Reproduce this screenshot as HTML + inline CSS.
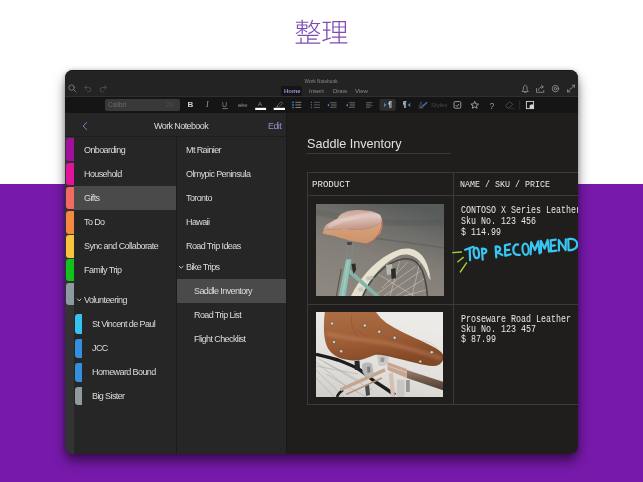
<!DOCTYPE html>
<html><head><meta charset="utf-8">
<style>
*{margin:0;padding:0;box-sizing:border-box}
html,body{width:643px;height:482px;overflow:hidden;background:#fff;font-family:"Liberation Sans",sans-serif}
.a{position:absolute}
#bg{left:0;top:184px;width:643px;height:298px;background:#7719aa}
#sh{left:65px;top:70px;width:513px;height:384px;border-radius:8px;box-shadow:0 7px 12px rgba(0,0,0,0.5),0 0 4px rgba(0,0,0,0.2)}
#frame{left:65px;top:70px;width:513px;height:384px;border-radius:8px;overflow:hidden;background:#262626}
#in{left:-65px;top:-70px;width:643px;height:482px;will-change:transform}
.t{position:absolute;white-space:pre;color:#dcdcdc;font-size:9px;letter-spacing:-0.6px;line-height:10px}
.tab{position:absolute;width:8px;border-radius:3px 0 0 3px}
.stab{position:absolute;width:7px;border-radius:3px 0 0 3px}
.mono{position:absolute;white-space:pre;font-family:"Liberation Mono",monospace;color:#e8e8e8;font-size:10px;line-height:10.7px;transform-origin:0 0}

</style></head><body>
<div id="bg" class="a"></div>
<svg class="a" style="left:0;top:0" width="643" height="60">
<g fill="#7e4db3">
<path transform="translate(294.3 42.4) scale(0.0272 -0.0272)" d="M224 174V-3H49V-46H953V-3H523V99H829V140H523V235H886V279H121V235H475V-3H271V174ZM93 660V496H255C207 434 119 371 44 342C54 335 67 319 74 309C141 339 217 396 268 455V310H313V496H481V660H313V721H513V762H313V835H268V762H60V721H268V660ZM136 622H268V534H136ZM313 622H437V534H313ZM313 455C365 429 427 390 460 361L483 393C451 422 388 459 336 482ZM633 673H839C817 600 783 539 737 488C688 545 653 609 631 669ZM648 835C619 729 569 633 502 570C513 562 530 546 538 538C562 563 585 592 606 625C629 570 662 512 708 459C652 407 582 369 500 341C509 333 524 313 530 304C610 335 680 375 737 427C787 376 850 332 926 301C931 312 945 331 955 340C879 367 817 408 768 457C821 514 861 585 887 673H950V717H654C670 751 683 788 693 825Z"/>
<path transform="translate(321.2 42.4) scale(0.0272 -0.0272)" d="M454 547H636V393H454ZM681 547H865V393H681ZM454 742H636V589H454ZM681 742H865V589H681ZM311 5V-40H962V5H683V168H928V213H683V349H913V786H408V349H634V213H393V168H634V5ZM42 86 55 36C139 65 250 103 357 139L349 186L232 146V424H339V471H232V714H352V761H52V714H184V471H63V424H184V131Z"/>
</g></svg>
<div id="sh" class="a"></div>
<div id="frame" class="a"><div id="in" class="a">
<!-- title bar -->
<div class="a" style="left:65px;top:69px;width:513px;height:27px;background:#232323"></div>
<div class="a" style="left:65px;top:70px;width:513px;height:1px;background:#1a1a1a"></div>
<div class="a" style="left:65px;top:96px;width:513px;height:1px;background:#2e2e2e"></div>
<div class="a" style="left:65px;top:97px;width:513px;height:16px;background:#151515"></div>
<div class="a" style="left:281px;top:86px;width:21px;height:10px;background:#151515"></div>
<div class="t" style="left:304.5px;top:77.3px;font-size:4.8px;letter-spacing:0;color:#8a8a8a">Work Notebook</div>
<div class="t" style="left:284px;top:86px;font-size:6px;letter-spacing:0;color:#a58bd6;font-weight:bold">Home</div>
<div class="t" style="left:309px;top:86px;font-size:6px;letter-spacing:0;color:#8a8a8a">Insert</div>
<div class="t" style="left:333px;top:86px;font-size:6px;letter-spacing:0;color:#8a8a8a">Draw</div>
<div class="t" style="left:355px;top:86px;font-size:6px;letter-spacing:0;color:#8a8a8a">View</div>
<!-- font box -->
<div class="a" style="left:105px;top:99px;width:75px;height:12px;background:#393939;border-radius:2px"></div>
<div class="t" style="left:108px;top:99.8px;font-size:6.4px;letter-spacing:0;color:#6a6a6a">Calibri</div>
<div class="t" style="left:166px;top:99.8px;font-size:6.4px;letter-spacing:0;color:#505050">20</div>
<!-- content bg -->
<div class="a" style="left:287px;top:113px;width:291px;height:341px;background:#1f1e1d"></div>
<div class="a" style="left:286px;top:113px;width:1px;height:341px;background:#181818"></div>
<!-- nav header -->
<div class="a" style="left:65px;top:136px;width:221px;height:1px;background:#1d1d1d"></div>
<div class="t" style="left:154px;top:121px;">Work Notebook</div>
<div class="t" style="left:268px;top:121px;color:#9c88cc">Edit</div>
<!-- tab strip -->
<div class="a" style="left:65px;top:137px;width:9px;height:317px;background:#333"></div>
<div class="a" style="left:176px;top:137px;width:1px;height:317px;background:#1c1c1c"></div>
<div class="a" style="left:74px;top:186px;width:102px;height:24px;background:#4a4a4a"></div>
<div class="a" style="left:177px;top:279px;width:109px;height:24px;background:#4a4a4a"></div>
<div class="tab" style="left:66px;top:138px;height:23px;background:#a0109a"></div>
<div class="tab" style="left:66px;top:163px;height:22px;background:#e2139a"></div>
<div class="tab" style="left:66px;top:187px;height:22px;background:#f26b62"></div>
<div class="tab" style="left:66px;top:211px;height:23px;background:#f48a42"></div>
<div class="tab" style="left:66px;top:235px;height:23px;background:#f8c43e"></div>
<div class="tab" style="left:66px;top:259px;height:22px;background:#13c11e"></div>
<div class="tab" style="left:66px;top:283px;height:22px;background:#8d9aa1"></div>
<div class="stab" style="left:75px;top:314px;height:20px;background:#35c4f2"></div>
<div class="stab" style="left:75px;top:339px;height:19px;background:#3390e0"></div>
<div class="stab" style="left:75px;top:363px;height:19px;background:#3390e0"></div>
<div class="stab" style="left:75px;top:387px;height:18px;background:#909aa1"></div>
<!-- sections text -->
<div class="t" style="left:84px;top:145px">Onboarding</div>
<div class="t" style="left:84px;top:169px">Household</div>
<div class="t" style="left:84px;top:193px">Gifts</div>
<div class="t" style="left:84px;top:217px">To Do</div>
<div class="t" style="left:84px;top:241px">Sync and Collaborate</div>
<div class="t" style="left:84px;top:265px">Family Trip</div>
<div class="t" style="left:84px;top:295px">Volunteering</div>
<div class="t" style="left:92px;top:319px">St Vincent de Paul</div>
<div class="t" style="left:92px;top:343px">JCC</div>
<div class="t" style="left:92px;top:367px">Homeward Bound</div>
<div class="t" style="left:92px;top:391px">Big Sister</div>
<!-- pages text -->
<div class="t" style="left:186px;top:145px">Mt Rainier</div>
<div class="t" style="left:186px;top:169px">Olmypic Peninsula</div>
<div class="t" style="left:186px;top:193px">Toronto</div>
<div class="t" style="left:186px;top:217px">Hawaii</div>
<div class="t" style="left:186px;top:241px">Road Trip Ideas</div>
<div class="t" style="left:186px;top:262px">Bike Trips</div>
<div class="t" style="left:194px;top:286px">Saddle Inventory</div>
<div class="t" style="left:194px;top:310px">Road Trip List</div>
<div class="t" style="left:194px;top:334px">Flight Checklist</div>
<!-- content -->
<div class="t" style="left:307px;top:137px;font-size:12.6px;letter-spacing:0;color:#e0e0e0;line-height:14px">Saddle Inventory</div>
<div class="a" style="left:306px;top:153px;width:145px;height:1px;background:#383838"></div>
<!-- table -->
<div class="a" style="left:307px;top:172px;width:280px;height:233px;border:1px solid #3a3a3a"></div>
<div class="a" style="left:307px;top:195px;width:280px;height:1px;background:#3a3a3a"></div>
<div class="a" style="left:307px;top:304px;width:280px;height:1px;background:#3a3a3a"></div>
<div class="a" style="left:453px;top:172px;width:1px;height:233px;background:#3a3a3a"></div>
<div class="mono" style="left:312px;top:179.6px;font-size:9.5px;transform:scaleX(0.956)">PRODUCT</div>
<div class="mono" style="left:460px;top:179.6px;font-size:9.5px;transform:scaleX(0.877)">NAME / SKU / PRICE</div>
<div class="mono" style="left:461px;top:206.3px;transform:scaleX(0.833)">CONTOSO X Series Leather
Sku No. 123 456
$ 114.99</div>
<div class="mono" style="left:461px;top:314.6px;line-height:10.2px;transform:scaleX(0.833)">Proseware Road Leather
Sku No. 123 457
$ 87.99</div>

<svg class="a" style="left:0;top:0" width="643" height="482" fill="none">
<!-- title bar icons -->
<g stroke="#7c7c7c" stroke-width="0.9" stroke-linecap="round">
<circle cx="71.6" cy="87.6" r="2.7"/>
<path d="M73.6 89.6 L76 92"/>
</g>
<g stroke="#4e4e4e" stroke-width="0.9" stroke-linecap="round" stroke-linejoin="round">
<path d="M86.6 85.5 L84.6 87.5 L86.6 89.5 M84.8 87.5 H88.6 A2.2 2.2 0 0 1 88.6 91.9 H87.6"/>
<path d="M104.4 85.5 L106.4 87.5 L104.4 89.5 M106.2 87.5 H102.4 A2.2 2.2 0 0 0 102.4 91.9 H103.4"/>
</g>
<g stroke="#8a8a8a" stroke-width="0.9" stroke-linecap="round" stroke-linejoin="round">
<path d="M522.3 91.2 C523.2 90.4 523.4 89.6 523.4 88 C523.4 86.2 524.1 85.2 525.2 85.2 C526.3 85.2 527 86.2 527 88 C527 89.6 527.2 90.4 528.1 91.2 Z M524.3 92.3 H526.1"/>
<path d="M536.5 88.5 V92.3 H543.8 V90.5 M538.5 90.2 C539 87.5 540.5 86.8 543 86.8 M541.5 85.3 L543.3 86.8 L541.5 88.3"/>
<circle cx="555.5" cy="88.6" r="3.2"/>
<circle cx="555.5" cy="88.6" r="1.3"/>
<path d="M567.6 91.8 L571 88.4 M567.6 91.8 H569.8 M567.6 91.8 V89.6 M574.4 85.2 L571 88.6 M574.4 85.2 H572.2 M574.4 85.2 V87.4"/>
</g>
<!-- ribbon -->
<g font-family="Liberation Sans" >
<text x="187.6" y="107.2" font-size="8" font-weight="bold" fill="#cfcfcf">B</text>
<text x="206" y="107.4" font-size="8" font-style="italic" font-family="Liberation Serif" fill="#9a9a9a">I</text>
<text x="222" y="107" font-size="7" fill="#8a8a8a">U</text>
<text x="237.8" y="107.3" font-size="6" fill="#777">abc</text>
<text x="258" y="105.8" font-size="6.2" fill="#8a8a8a">A</text>
</g>
<path d="M222.3 108.6 H227.8" stroke="#8a8a8a" stroke-width="0.8"/>
<path d="M237.8 105.4 H246.8" stroke="#777" stroke-width="0.6"/>
<rect x="255.2" y="107.8" width="10.9" height="2.2" fill="#fff"/>
<rect x="273.7" y="107.8" width="11.3" height="2.2" fill="#fff"/>
<path d="M277 106 L281 101.8 L282.6 103.3 L278.6 107.2 Z" stroke="#777" stroke-width="0.7"/>
<path d="M276.2 107.4 L277 106 L278.4 107.2 Z" fill="#c07030"/>
<rect x="379.4" y="99" width="16.4" height="11.7" rx="2" fill="#2e2e2e"/>
<g fill="#3d8ad6">
<circle cx="293" cy="102.3" r="0.85"/><circle cx="293" cy="104.9" r="0.85"/><circle cx="293" cy="107.5" r="0.85"/>
<rect x="310.8" y="101.7" width="1.2" height="1.4" fill="#3a6a90"/><rect x="310.8" y="104.2" width="1.2" height="1.4" fill="#3a6a90"/><rect x="310.8" y="106.8" width="1.2" height="1.4" fill="#3a6a90"/>
<path d="M327.3 105.2 L329.2 103.6 V106.8 Z"/>
<path d="M346 105.2 L347.9 103.6 V106.8 Z"/>
<path d="M384 102.8 L386.4 104.9 L384 107 Z"/>
<path d="M410.2 102.8 L407.8 104.9 L410.2 107 Z"/>
<path d="M419.5 108 L426.5 101.8 L427.7 102.8 L421 108.8 Z" fill="#3a6fa8"/>
</g>
<g stroke="#8a8a8a" stroke-width="0.9">
<path d="M295.4 102.3 H301.2 M295.4 104.9 H301.2 M295.4 107.5 H301.2"/>
</g>
<g stroke="#5e5e5e" stroke-width="0.9">
<path d="M313.8 102.3 H320 M313.8 104.9 H320 M313.8 107.5 H320"/>
<path d="M330 102.6 H336.6 M331 104.2 H336.6 M331 105.8 H336.6 M330 107.4 H336.6"/>
<path d="M348.8 102.6 H355 M349.8 104.2 H355 M349.8 105.8 H355 M348.8 107.4 H355"/>
<path d="M366 102.6 H372.6 M366 104.2 H370.6 M366 105.8 H372.6 M366 107.4 H370"/>
</g>
<path d="M389.5 101.6 H391.6 M389.8 101.6 V108 M391 101.6 V108" stroke="#d0d0d0" stroke-width="0.8"/>
<path d="M389.8 101.6 A1.8 1.9 0 0 0 389.8 105.3 Z" fill="#d0d0d0"/>
<path d="M403.2 101.6 H406.6 M404.4 101.6 V108 M405.6 101.6 V108" stroke="#c0c0c0" stroke-width="0.8"/>
<path d="M404.4 101.6 A1.8 1.9 0 0 0 404.4 105.3 Z" fill="#c0c0c0"/>
<g stroke="#4a4a4a" stroke-width="0.8">
<path d="M418.6 108.4 L421 101.8 L423.2 108.4 M419.6 106 H422.6"/>
</g>
<text x="431" y="107.2" font-family="Liberation Sans" font-size="6" fill="#484848">Styles</text>
<g stroke="#a8a8a8" stroke-width="0.9" stroke-linejoin="round">
<rect x="454" y="101.6" width="6.8" height="6.6" rx="1.2"/>
<path d="M455.8 105.2 L457 106.4 L459 104"/>
<path d="M474.7 101.3 L475.8 103.9 L478.5 104.1 L476.4 105.8 L477.1 108.3 L474.7 106.9 L472.3 108.3 L473 105.8 L470.9 104.1 L473.6 103.9 Z"/>
</g>
<text x="489.5" y="108.5" font-family="Liberation Sans" font-size="8.5" fill="#9a9a9a">?</text>
<g stroke="#555" stroke-width="0.8" stroke-linejoin="round">
<path d="M505.6 105.6 L509.6 101.6 L512.8 104.4 L509 108 L507.4 108 Z"/>
</g>
<g fill="#666"><circle cx="510.6" cy="108.4" r="0.45"/><circle cx="512" cy="108.4" r="0.45"/><circle cx="513.4" cy="108.4" r="0.45"/></g>
<path d="M519.7 100.3 V109.6" stroke="#353535" stroke-width="0.8"/>
<rect x="526.4" y="101.4" width="7.2" height="7.2" stroke="#d8d8d8" stroke-width="0.9"/>
<path d="M533.6 104.6 V108.6 H529.6 V105.8 L530.8 104.6 Z" fill="#d8d8d8"/>
<!-- nav chevrons -->
<path d="M86.6 122.4 L83.2 126 L86.6 129.6" stroke="#8a76be" stroke-width="1" stroke-linecap="round" stroke-linejoin="round"/>
<path d="M77.4 299 L79.2 300.9 L81 299" stroke="#c8c8c8" stroke-width="1" stroke-linecap="round" stroke-linejoin="round"/>
<path d="M179.3 266.3 L181.2 268.2 L183.1 266.3" stroke="#c8c8c8" stroke-width="1" stroke-linecap="round" stroke-linejoin="round"/>
</svg>

<svg class="a" style="left:316px;top:204px" width="128" height="92" viewBox="0 0 128 92">
<defs>
<linearGradient id="p1bg" x1="0.7" y1="0" x2="0.3" y2="1">
<stop offset="0" stop-color="#575b5b"/>
<stop offset="0.28" stop-color="#706f6b"/>
<stop offset="0.55" stop-color="#837e77"/>
<stop offset="1" stop-color="#8d877f"/>
</linearGradient>
<linearGradient id="seatTop" x1="0" y1="0" x2="0.2" y2="1">
<stop offset="0" stop-color="#c49a8c"/>
<stop offset="0.5" stop-color="#dcc0b6"/>
<stop offset="1" stop-color="#c09282"/>
</linearGradient>
<linearGradient id="seatSide" x1="0" y1="0" x2="0" y2="1">
<stop offset="0" stop-color="#d8a37a"/>
<stop offset="1" stop-color="#cc936b"/>
</linearGradient>
</defs>
<rect width="128" height="92" fill="url(#p1bg)"/>
<path d="M0 8 C30 14 60 22 128 18" stroke="#3e4244" stroke-width="6" opacity="0.15" fill="none"/>
<path d="M20 30 C50 33 90 38 128 44" stroke="#4a4c4c" stroke-width="1.5" opacity="0.35" fill="none"/>
<!-- spokes -->
<g stroke="#d6d3ca" stroke-width="0.6" opacity="0.85">
<path d="M58 92 L100 62 M68 92 L106 66 M80 92 L110 74 M66 84 L92 58 M74 92 L84 56 M96 92 L104 58 M88 92 L110 86 M62 70 L98 92"/>
</g>
<!-- tire / rim -->
<path d="M47 92 C54 74 70 58 87 55 C101 53 109 63 111.5 92" stroke="#4a4843" stroke-width="1.6" fill="none"/>
<path d="M50 92 C57 76 72 61 87 58.5 C99 57 106 66 108.5 92" stroke="#8f8c85" stroke-width="0.8" fill="none"/>
<!-- fender -->
<path d="M35 92 C45 72 62 52 85 45 C100 42 110 50 114 71 L112.7 74 C108 58 98 48 85 51 C70 56 55 72 45.7 92 Z" fill="#e6e0cf"/>
<path d="M112.7 74 L114 71 L114.6 76 Z" fill="#d8d2c2"/>
<!-- dynamo / chrome -->
<path d="M70 61 L76 60 L77 70 L71 71 Z" fill="#b9b9b4"/>
<path d="M75 65 L79.5 64 L80 74 L75.5 75 Z" fill="#2c2c2b"/>
<path d="M50 73 L57 71.5 L58 75 L51 77 Z" fill="#a9aeab" opacity="0.6"/>
<path d="M42 84 L47 83 L48 87 L43 88 Z" fill="#a9adab" opacity="0.5"/>
<!-- teal tubes -->
<path d="M30 55.2 L35.5 55.2 L29.5 92 L22.8 92 Z" fill="#8cbfb1"/>
<path d="M31.5 56 L33 56 L27.4 92 L25.8 92 Z" fill="#a6d2c5" opacity="0.7"/>
<path d="M33.5 64 L36 67 L64 92 L58.6 92 L33 69.5 Z" fill="#83b6a8"/>
<path d="M25.3 64.9 L20.4 92" stroke="#3a3a38" stroke-width="0.7"/>
<path d="M35.5 60 L39.5 59.5 L40 66 L37.5 70 L36.5 66 Z" fill="#2b2b2a"/>
<!-- seat post -->
<path d="M32.5 39.6 L30 55.2 M37.3 39.6 L35.5 55.2" stroke="#7c8b88" stroke-width="1.1"/>
<path d="M31 38 L36 38 L35.6 41 L31.4 41 Z" fill="#454545"/>
<!-- saddle -->
<path d="M7.1 27.2 C6 29 7.5 29.9 8.7 29.9 C11 30.5 13 31 16.3 31.6 C20 32.5 24 34 27.2 34.8 C31 36 35 37 38.1 37.6 C43 38.5 47 39.5 51.2 39.2 C54 38 56 37 57.7 35.9 C60 33 62.5 31 64.2 29.4 C65.5 26 66.3 24 66.4 21.8 L65.3 18.5 C62 21 58 23 54.4 24 C50 25 45 26 41.4 26.1 C36 25.5 31 25 27.2 25 C22 25.2 17 25.4 13 25.6 C10 26 8.5 26.5 7.1 27.2 Z" fill="url(#seatSide)"/>
<path d="M7.1 27.2 C8 23 10 20.5 13 19 C16 17 19 15.5 21.8 14.2 C22.5 12.5 23 11.8 24 10.9 C27 9 30 7.8 32.7 7.1 C36 6.3 40 6 43.5 6 C47 6.2 51 6.5 54.4 7.1 C57 7.8 60 8.8 62 9.8 C64 11 65.3 13 65.9 15.2 C66.3 17 66.4 19 66.4 21.8 L65.3 18.5 C62 21 58 23 54.4 24 C50 25 45 26 41.4 26.1 C36 25.5 31 25 27.2 25 C22 25.2 17 25.4 13 25.6 C10 26 8.5 26.5 7.1 27.2 Z" fill="url(#seatTop)"/>
<path d="M14 22 C22 17 34 14 44 12 C52 10.5 58 10 63 12" stroke="#efe0d9" stroke-width="4" fill="none" opacity="0.35" stroke-linecap="round"/>
<path d="M66 16 C66.5 24 63 31 57.5 36 C55 38 53 39 51.2 39.2" stroke="#c65d5d" stroke-width="0.8" fill="none"/>
</svg>
<svg class="a" style="left:315.5px;top:312px" width="127.5" height="85" viewBox="0 0 127.5 85">
<defs>
<linearGradient id="p2bg" x1="0.3" y1="0" x2="0" y2="1">
<stop offset="0" stop-color="#ebeae6"/>
<stop offset="0.6" stop-color="#e0dfdb"/>
<stop offset="1" stop-color="#cfcdc8"/>
</linearGradient>
<linearGradient id="leather" x1="0" y1="0" x2="0.3" y2="1">
<stop offset="0" stop-color="#ad6e44"/>
<stop offset="0.55" stop-color="#9e5e36"/>
<stop offset="1" stop-color="#834826"/>
</linearGradient>
<filter id="blur2" x="-20%" y="-50%" width="140%" height="200%"><feGaussianBlur stdDeviation="1.5"/></filter>
<linearGradient id="tube2" x1="0" y1="0" x2="0" y2="1">
<stop offset="0" stop-color="#9a7f6c"/>
<stop offset="0.5" stop-color="#6f5849"/>
<stop offset="1" stop-color="#4e3d33"/>
</linearGradient>
</defs>
<rect width="127.5" height="85" fill="url(#p2bg)"/>
<path d="M95 30 C105 26 118 30 122 38" stroke="#c9c8c4" stroke-width="1" fill="none" opacity="0.6"/>
<!-- spokes -->
<g stroke="#a9a7a2" stroke-width="0.55">
<path d="M0 50 L34 78 M0 58 L28 85 M3 47 L46 70 M0 66 L18 85 M8 50 L56 78 M0 54 L42 62 M10 62 L50 85"/>
</g>
<!-- tire -->
<path d="M0 42.3 C8 44 15 46 22 48 C30 51 38 54 44 58 C50 62 54 66 58 69 C66 74 72 78 79 83" stroke="#1d1d1d" stroke-width="3.4" fill="none"/>
<path d="M21 85 C22 82 24 80 27 78" stroke="#1d1d1d" stroke-width="2.6" fill="none"/>
<!-- lower posts -->
<path d="M81 67.7 L88.4 67.7 L88.4 85 L81 85 Z" fill="#cbc6c1"/>
<path d="M90 68 L93.8 68 L93.8 80 L90 80 Z" fill="#9a9894"/>
<path d="M49 73 L53 72 L54 83 L50 84 Z" fill="#4a4a4a"/>
<!-- brown tube -->
<path d="M90.8 58 L127.5 70 L127.5 78.5 L90.8 66 Z" fill="url(#tube2)"/>
<path d="M71.5 50 L90.8 57 L90.8 66 L71.5 58 Z" fill="#c7a590"/>
<path d="M72 54 L90.5 60.5" stroke="#e4cdbd" stroke-width="1" opacity="0.8"/>
<path d="M72.7 61.7 L77 60 L79 85 L75 85 Z" fill="#d5c0b2"/>
<!-- rails & clamp -->
<path d="M24.4 77.8 L69 57.9" stroke="#c6a58e" stroke-width="3.4"/>
<path d="M30 82.5 L66 66" stroke="#b39580" stroke-width="1.5"/>
<path d="M38.5 49 L43.5 48.5 L44 57 L39 58 Z" fill="#262626"/>
<path d="M46 53 C48 50 53 50 56 52 L57.5 60 C56 64 52 66 49 64 L46.5 60 Z" fill="#b7b8b6"/>
<path d="M51 55 L54 54.5 L54.5 60 L51.5 61 Z" fill="#7d7e7d"/>
<path d="M61 43 C64 41 70 41 72.5 43.5 L72 51 C70 54 65 55 62.5 53 Z" fill="#c9cac8"/>
<path d="M64.5 45.5 L68.5 45.5 L68 50 L64.5 50 Z" fill="#959695"/>
<!-- saddle -->
<path d="M8.8 0 H60 C62 3 66 8 72 12 C80 17 90 22 100 26.5 C108 30 116 34 121 37 C125 39.5 127.5 42 127.5 45 C127.5 49 125 52 121 53.6 C116 55 108 53 100 51 C92 49 82 46.5 74 44.8 C68 43.5 62 41.5 55.5 44.2 C48 47 42 49 36.8 48.5 C29 48 22 46 18.2 43 C13 39 10.5 35 9 28 C7.5 20 7.6 10 8.8 0 Z" fill="url(#leather)"/>
<path d="M60 41 C70 42 80 45 95 48.5 C108 52 116 54 121 53" stroke="#7d4526" stroke-width="1.2" fill="none" opacity="0.5"/>
<path d="M36 2 C34 12 37 20 44 28 M40 18 C44 20 48 22 50 26" stroke="#6e3d22" stroke-width="0.45" fill="none" opacity="0.55"/>
<path d="M12 22 C30 26 50 28 70 31 C90 35 108 41 124 46" stroke="#c98d66" stroke-width="4" fill="none" opacity="0.4" stroke-linecap="round" filter="url(#blur2)"/>
<g fill="#cfcbc6" stroke="#5e3f2c" stroke-width="0.6">
<circle cx="16" cy="11.5" r="1.75"/><circle cx="48.8" cy="13.5" r="1.75"/><circle cx="63.2" cy="19.7" r="1.75"/><circle cx="78.6" cy="25.8" r="1.75"/>
<circle cx="18" cy="30" r="1.75"/><circle cx="25.2" cy="39.2" r="1.75"/><circle cx="115.7" cy="40.2" r="1.75"/><circle cx="104.3" cy="49.5" r="1.6"/>
</g>
</svg>

<svg class="a" style="left:0;top:0" width="643" height="482" fill="none">
<g stroke="#a2d431" stroke-width="1.35" stroke-linecap="round">
<path d="M452.7 252.6 L461.4 252"/>
<path d="M457.8 261.8 L463.3 257.4"/>
<path d="M460.3 272 L466.5 262.8"/>
</g>
<g stroke="#38c6f2" stroke-width="2.2" stroke-linecap="round" stroke-linejoin="round">
<path d="M465.2 249.8 L473.4 246.8 M469.6 248.2 L470.1 260.1"/>
<ellipse cx="476.3" cy="253" rx="2.6" ry="5.2" transform="rotate(-8 476.3 253)"/>
<path d="M482.7 259.6 L481.9 248.6 C485 248.5 486.6 249.5 486.3 251.4 C486 253.2 484 253.6 482.3 253.6"/>
<path d="M496.3 257.4 L495.6 246.5 C498.5 246.2 500.3 247.2 500.2 249.4 C500 251.2 498.2 251.8 496.7 252 L502.3 255"/>
<path d="M510 244.2 L504.9 245.3 L505.3 255.8 L510.7 254.3 M505.1 250.2 L509.2 249.8"/>
<path d="M518.1 244.6 C515.6 244 513.4 245.5 513.3 249.5 C513.2 253.5 515.5 255.6 519.7 254.8"/>
<ellipse cx="525.6" cy="249.2" rx="3.1" ry="5.6" transform="rotate(-6 525.6 249.2)"/>
<path d="M530.6 254.3 L531.2 242.2 L535 250 L538.2 241.4 L539.6 253.3"/>
<path d="M541 252.4 L540.8 240.8 L544.6 248.6 L547.6 240 L549 251.6"/>
<path d="M555.8 239.6 L550.6 240.4 L551 251.4 L556.6 250.6 M550.8 245.8 L554.8 245.4"/>
<path d="M559 250.6 L558.8 240 L565.6 250 L565.8 239.4"/>
<path d="M568.6 250.4 L568.2 239 C574 238.2 577 240.5 577.2 244 C577.4 248 574 250.3 568.6 250.4"/>
</g>
</svg>

</div></div>
</body></html>
